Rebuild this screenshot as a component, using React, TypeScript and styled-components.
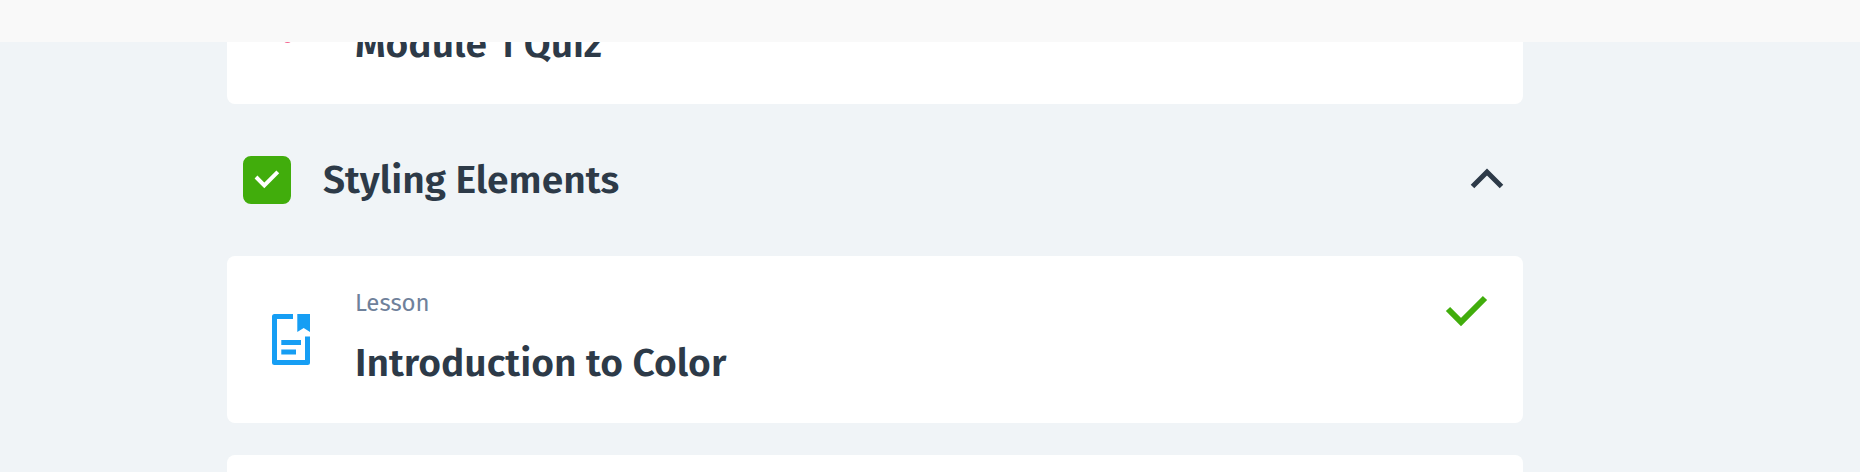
import React, { useState } from "react";
import styled, { createGlobalStyle, ThemeProvider } from "styled-components";

const theme = {
  page: "#f0f4f7",
  bar: "#f9f9f9",
  ink: "#2d3a48",
  muted: "#6f819b",
  green: "#41ad0c",
  blue: "#169ef4",
  pink: "#f4658f",
};

const GlobalStyle = createGlobalStyle`
  *, *::before, *::after { box-sizing: border-box; }
  body {
    margin: 0;
    background: ${theme.page};
    color: ${theme.ink};
    font-family: "Fira Sans", Roboto, "Liberation Sans", sans-serif;
  }
  h2, h3, p, ul { margin: 0; padding: 0; }
`;

const Page = styled.div`
  display: flex;
  flex-direction: column;
  height: 100vh;
  overflow: hidden;
`;

const TopBar = styled.header`
  flex: 0 0 42px;
  background: ${({ theme }) => theme.bar};
`;

const Viewport = styled.main`
  flex: 1;
  min-height: 0;
  overflow: hidden;
  padding: 0 110px 0 0;
`;

/* The outline is scrolled so that its first card is partly under the bar. */
const Outline = styled.div`
  width: 100%;
  max-width: 1296px;
  margin: -105px auto 0;
`;

const CardList = styled.ul`
  display: flex;
  flex-direction: column;
  gap: 32px;
  list-style: none;
`;

const Card = styled.li`
  display: flex;
  align-items: flex-start;
  gap: 32px;
  min-height: 167px;
  padding: 32px;
  border-radius: 8px;
  background: #fff;
`;

const KindIcon = styled.svg`
  flex: none;
  align-self: center;
  width: 64px;
  height: 64px;
`;

const CardText = styled.div`
  display: flex;
  flex: 1;
  flex-direction: column;
  align-self: stretch;
  justify-content: flex-end;
  gap: 17px;
`;

const Kind = styled.p`
  color: ${({ theme }) => theme.muted};
  font-size: 24px;
  line-height: 30px;
`;

const CardTitle = styled.h3`
  font-size: 39px;
  font-weight: 600;
  line-height: 56px;
`;

const DoneIcon = styled.svg`
  flex: none;
  width: 48px;
  height: 48px;
`;

const ModuleHeader = styled.div`
  display: flex;
  align-items: center;
  gap: 32px;
  height: 152px;
  padding: 0 16px;
`;

const ModuleLabel = styled.label`
  display: flex;
  flex: 1;
  align-items: center;
  gap: 32px;
`;

const CheckBox = styled.span`
  display: grid;
  width: 48px;
  height: 48px;

  & > * {
    grid-area: 1 / 1;
  }
`;

const CheckInput = styled.input`
  appearance: none;
  width: 48px;
  height: 48px;
  margin: 0;
  border: 2px solid ${({ theme }) => theme.green};
  border-radius: 8px;
  background: #fff;

  &:checked {
    background: ${({ theme }) => theme.green};
  }
`;

const CheckMark = styled.svg`
  width: 48px;
  height: 48px;
  pointer-events: none;
`;

const ModuleTitle = styled.h2`
  font-size: 39px;
  font-weight: 600;
  line-height: 48px;
`;

const ToggleButton = styled.button`
  width: 40px;
  height: 40px;
  padding: 0;
  border: 0;
  background: none;
  color: inherit;
  cursor: pointer;
`;

const Chevron = styled.svg<{ $open: boolean }>`
  display: block;
  transform: ${({ $open }) => ($open ? "none" : "rotate(180deg)")};
`;

function LessonIcon() {
  return (
    <KindIcon viewBox="0 0 64 64" aria-hidden="true">
      <path
        d="M34 8.5H15.5V54.5H48.5V28.5"
        fill="none"
        stroke={theme.blue}
        strokeWidth="5"
        strokeLinejoin="round"
      />
      <path d="M38.3 6H51V24L44.7 20L38.3 24Z" fill={theme.blue} />
      <path d="M22.3 34.5H42M22.3 44H37" stroke={theme.blue} strokeWidth="5" />
    </KindIcon>
  );
}

function QuizIcon() {
  return (
    <KindIcon viewBox="0 0 64 64" aria-hidden="true">
      <path
        d="M18 20C18 2 42 4 42 19C42 28 28.5 28 28.5 41"
        fill="none"
        stroke={theme.pink}
        strokeWidth="6"
      />
      <circle cx="28.5" cy="50" r="4" fill={theme.pink} />
    </KindIcon>
  );
}

export default function App() {
  const [done, setDone] = useState(true);
  const [open, setOpen] = useState(true);

  return (
    <ThemeProvider theme={theme}>
      <GlobalStyle />
      <Page>
        <TopBar />
        <Viewport>
          <Outline>
            <CardList>
              <Card>
                <QuizIcon />
                <CardText>
                  <CardTitle>Module 1 Quiz</CardTitle>
                </CardText>
              </Card>
            </CardList>
            <ModuleHeader>
              <ModuleLabel>
                <CheckBox>
                  <CheckInput
                    type="checkbox"
                    checked={done}
                    onChange={(e) => setDone(e.target.checked)}
                  />
                  <CheckMark viewBox="0 0 48 48" aria-hidden="true">
                    <path
                      d="M13 21L21.3 29.3L34.8 15.8"
                      fill="none"
                      stroke="#fff"
                      strokeWidth="4"
                    />
                  </CheckMark>
                </CheckBox>
                <ModuleTitle>Styling Elements</ModuleTitle>
              </ModuleLabel>
              <ToggleButton type="button" aria-expanded={open} onClick={() => setOpen(!open)}>
                <Chevron $open={open} width="40" height="40" viewBox="0 0 40 40" aria-hidden="true">
                  <path
                    d="M5.5 26.5L20 12L34.5 26.5"
                    fill="none"
                    stroke="currentColor"
                    strokeWidth="5"
                  />
                </Chevron>
              </ToggleButton>
            </ModuleHeader>
            {open && (
              <CardList>
                <Card>
                  <LessonIcon />
                  <CardText>
                    <Kind>Lesson</Kind>
                    <CardTitle>Introduction to Color</CardTitle>
                  </CardText>
                  <DoneIcon viewBox="0 0 48 48" aria-hidden="true">
                    <path
                      d="M5 21L18 34L42 10"
                      fill="none"
                      stroke={theme.green}
                      strokeWidth="6"
                    />
                  </DoneIcon>
                </Card>
                <Card />
              </CardList>
            )}
          </Outline>
        </Viewport>
      </Page>
    </ThemeProvider>
  );
}
